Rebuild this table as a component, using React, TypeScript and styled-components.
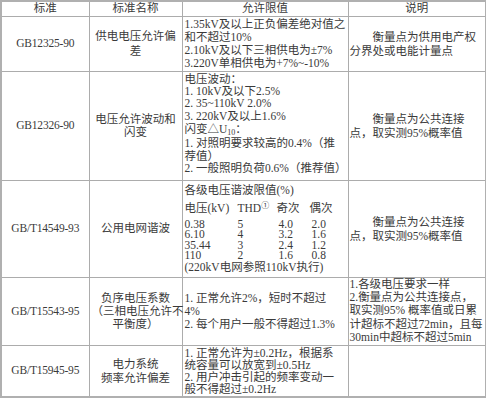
import styled, { createGlobalStyle } from "styled-components";

const GlobalStyle = createGlobalStyle`
  html, body {
    margin: 0;
    padding: 0;
    background: #ffffff;
  }
  body {
    font-family: "Liberation Serif", "Noto Sans CJK SC", serif;
    color: #3a3a3a;
  }
`;

const Sheet = styled.table`
  border-collapse: collapse;
  table-layout: fixed;
  width: 485px;
  border: 2px solid #b0b0b0;
  font-size: 11.5px;
`;

const Col = styled.col<{ $w: number }>`
  width: ${({ $w }) => $w}px;
`;

const Row = styled.tr<{ $h: number }>`
  height: ${({ $h }) => $h}px;
`;

const Head = styled.th`
  border: 1px solid #acacac;
  padding: 0;
  font-weight: 400;
  text-align: center;
  line-height: 13px;
`;

const Cell = styled.td<{
  $align?: "left" | "center";
  $lh?: number;
  $pad?: number;
  $top?: boolean;
}>`
  border: 1px solid #acacac;
  padding: ${({ $top }) => ($top ? "1px" : "0")} ${({ $pad }) => $pad ?? 2}px 0;
  text-align: ${({ $align }) => $align ?? "left"};
  vertical-align: ${({ $top }) => ($top ? "top" : "middle")};
  line-height: ${({ $lh }) => $lh ?? 13}px;
`;

const Line = styled.div<{ $indent?: boolean; $tall?: boolean }>`
  white-space: nowrap;
  text-indent: ${({ $indent }) => ($indent ? "2em" : "0")};
  ${({ $tall }) => ($tall ? "line-height: 14px; padding-bottom: 1px;" : "")}
`;

const Code = styled.span`
  letter-spacing: -0.2px;
`;

const Sub = styled.span`
  font-size: 8px;
  line-height: 0;
  vertical-align: -2px;
`;

const Sup = styled.span`
  font-size: 8px;
  line-height: 0;
  vertical-align: 4px;
`;

const HarmonicHead = styled.div`
  display: grid;
  grid-template-columns: 53px 39px 33px auto;
  padding-top: 3px;
  line-height: 16px;
`;

const HarmonicGrid = styled.div`
  display: grid;
  grid-template-columns: 53px 41px 33px auto;
  line-height: 10.5px;
  margin-top: 3px;
`;

const harmonics = [
  ["0.38", "5", "4.0", "2.0"],
  ["6.10", "4", "3.2", "1.6"],
  ["35.44", "3", "2.4", "1.2"],
  ["110", "2", "1.6", "0.8"],
];

export default function App() {
  return (
    <>
      <GlobalStyle />
      <Sheet>
        <colgroup>
          <Col $w={88} />
          <Col $w={93} />
          <Col $w={166} />
          <Col $w={138} />
        </colgroup>
        <thead>
          <Row $h={15}>
            <Head>标准</Head>
            <Head>标准名称</Head>
            <Head>允许限值</Head>
            <Head>说明</Head>
          </Row>
        </thead>
        <tbody>
          <Row $h={55}>
            <Cell $align="center">
              <Code>GB12325-90</Code>
            </Cell>
            <Cell $align="center" $lh={15}>
              <Line>供电电压允许偏</Line>
              <Line>差</Line>
            </Cell>
            <Cell>
              <Line>1.35kV及以上正负偏差绝对值之</Line>
              <Line>和不超过10%</Line>
              <Line>2.10kV及以下三相供电为±7%</Line>
              <Line>3.220V单相供电为+7%~-10%</Line>
            </Cell>
            <Cell $pad={1} $lh={14}>
              <Line $indent>衡量点为供用电产权</Line>
              <Line>分界处或电能计量点</Line>
            </Cell>
          </Row>

          <Row $h={109}>
            <Cell $align="center">
              <Code>GB12326-90</Code>
            </Cell>
            <Cell $align="center" $lh={13}>
              <Line>电压允许波动和</Line>
              <Line>闪变</Line>
            </Cell>
            <Cell $lh={12.4} $top>
              <Line>电压波动：</Line>
              <Line>1. 10kV及以下2.5%</Line>
              <Line>2. 35~110kV 2.0%</Line>
              <Line>3. 220kV及以上1.6%</Line>
              <Line $tall>
                闪变△U<Sub>10</Sub>：
              </Line>
              <Line>1. 对照明要求较高的0.4%（推</Line>
              <Line>荐值）</Line>
              <Line>2. 一般照明负荷0.6%（推荐值）</Line>
            </Cell>
            <Cell $pad={1} $lh={14}>
              <Line $indent>衡量点为公共连接</Line>
              <Line>点，取实测95%概率值</Line>
            </Cell>
          </Row>

          <Row $h={97}>
            <Cell $align="center">
              <Code>GB/T14549-93</Code>
            </Cell>
            <Cell $align="center">
              <Line>公用电网谐波</Line>
            </Cell>
            <Cell $lh={13}>
              <Line>各级电压谐波限值(%)</Line>
              <HarmonicHead>
                <span>电压(kV)</span>
                <span>
                  THD<Sup>①</Sup>
                </span>
                <span>奇次</span>
                <span>偶次</span>
              </HarmonicHead>
              <HarmonicGrid>
                {harmonics.map((row) =>
                  row.map((v, i) => <span key={row[0] + i}>{v}</span>)
                )}
              </HarmonicGrid>
              <Line>(220kV电网参照110kV执行)</Line>
            </Cell>
            <Cell $pad={1} $lh={14}>
              <Line $indent>衡量点为公共连接</Line>
              <Line>点，取实测95%概率值</Line>
            </Cell>
          </Row>

          <Row $h={67}>
            <Cell $align="center">
              <Code>GB/T15543-95</Code>
            </Cell>
            <Cell $align="center" $lh={13}>
              <Line>负序电压系数</Line>
              <Line>（三相电压允许不</Line>
              <Line>平衡度）</Line>
            </Cell>
            <Cell $lh={13}>
              <Line>1. 正常允许2%，短时不超过</Line>
              <Line>4%</Line>
              <Line>2. 每个用户一般不得超过1.3%</Line>
            </Cell>
            <Cell $pad={1} $lh={13.4}>
              <Line>1.各级电压要求一样</Line>
              <Line>2.衡量点为公共连接点，</Line>
              <Line>取实测95% 概率值或日累</Line>
              <Line>计超标不超过72min，且每</Line>
              <Line>30min中超标不超过5min</Line>
            </Cell>
          </Row>

          <Row $h={52}>
            <Cell $align="center">
              <Code>GB/T15945-95</Code>
            </Cell>
            <Cell $align="center" $lh={14}>
              <Line>电力系统</Line>
              <Line>频率允许偏差</Line>
            </Cell>
            <Cell $lh={12}>
              <Line>1. 正常允许为±0.2Hz，根据系</Line>
              <Line>统容量可以放宽到±0.5Hz</Line>
              <Line>2. 用户冲击引起的频率变动一</Line>
              <Line>般不得超过±0.2Hz</Line>
            </Cell>
            <Cell $pad={1} />
          </Row>
        </tbody>
      </Sheet>
    </>
  );
}
